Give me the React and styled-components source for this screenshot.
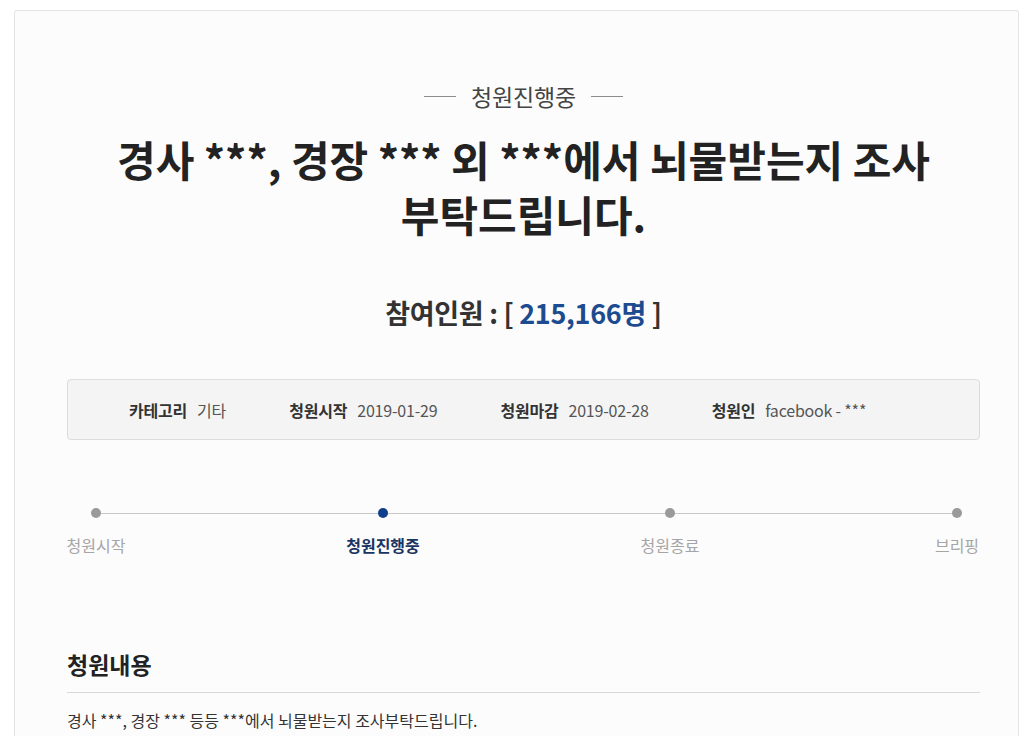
import React from "react";
import styled, { createGlobalStyle } from "styled-components";

const Global = createGlobalStyle`
  html, body { margin: 0; padding: 0; background: #ffffff; }
  body { font-family: "Noto Sans CJK KR", "Noto Sans", sans-serif; color: #333; }
`;

const Page = styled.div`
  padding: 10px 5px 0 14px;
  height: 736px;
  box-sizing: border-box;
  overflow: hidden;
`;

const Card = styled.div`
  background: #fcfcfc;
  border: 1px solid #e4e4e4;
  border-bottom: none;
  border-radius: 3px 3px 0 0;
  padding: 69px 38px 0 52px;
  min-height: 800px;
`;

const Status = styled.div`
  display: flex;
  align-items: center;
  justify-content: center;
  gap: 15px;
  font-size: 23px;
  color: #444;
  letter-spacing: -0.2px;
  line-height: 32px;
  &::before, &::after {
    content: "";
    width: 32px;
    height: 1px;
    background: #8c8c8c;
  }
`;

const Title = styled.h1`
  margin: 19px 0 0;
  text-align: center;
  font-size: 42px;
  font-weight: 700;
  line-height: 55px;
  color: #222;
  letter-spacing: 0;
`;

const Count = styled.div`
  margin-top: 54px;
  text-align: center;
  font-size: 27px;
  font-weight: 700;
  color: #333;
  line-height: 36px;
  letter-spacing: -0.3px;
`;

const Num = styled.span`
  color: #1c4b8f;
`;

const InfoBox = styled.div`
  margin-top: 48px;
  height: 61px;
  box-sizing: border-box;
  display: flex;
  align-items: center;
  gap: 63px;
  padding-left: 61px;
  background: #f4f4f4;
  border: 1px solid #dcdcdc;
  border-radius: 4px;
`;

const InfoItem = styled.div`
  display: flex;
  align-items: baseline;
  gap: 10px;
  font-size: 16px;
  letter-spacing: -0.2px;
`;

const InfoLabel = styled.span`
  font-weight: 700;
  color: #333;
`;

const InfoValue = styled.span`
  color: #555;
  font-weight: 400;
`;

const Steps = styled.div`
  position: relative;
  margin: 68px -17px 0 -11px;
  display: flex;
  justify-content: space-between;
  &::before {
    content: "";
    position: absolute;
    top: 5px;
    left: 40px;
    right: 40px;
    height: 1px;
    background: #c8c8c8;
  }
`;

const Step = styled.div`
  position: relative;
  width: 80px;
  display: flex;
  flex-direction: column;
  align-items: center;
  gap: 16px;
`;

const Dot = styled.span`
  width: 10px;
  height: 10px;
  border-radius: 50%;
  background: ${(p) => (p.$active ? "#0f3f8c" : "#9a9a9a")};
`;

const StepLabel = styled.span`
  font-size: 16px;
  letter-spacing: 0;
  white-space: nowrap;
  line-height: 22px;
  color: ${(p) => (p.$active ? "#1b3563" : "#a5a5a5")};
  font-weight: ${(p) => (p.$active ? 700 : 400)};
`;

const SectionTitle = styled.h2`
  margin: 93px 0 0;
  font-size: 23px;
  font-weight: 700;
  color: #222;
  line-height: 30px;
  letter-spacing: 0;
  padding-bottom: 13px;
  border-bottom: 1px solid #d8d8d8;
`;

const Body = styled.p`
  margin: 15px 0 0;
  font-size: 16px;
  color: #333;
  letter-spacing: 0;
  line-height: 24px;
`;

const steps = [
  { label: "청원시작" },
  { label: "청원진행중", active: true },
  { label: "청원종료" },
  { label: "브리핑" },
];

const info = [
  ["카테고리", "기타"],
  ["청원시작", "2019-01-29"],
  ["청원마감", "2019-02-28"],
  ["청원인", "facebook - ***"],
];

export default function App() {
  return (
    <>
      <Global />
      <Page>
        <Card>
          <Status>청원진행중</Status>
          <Title>
            경사 ***, 경장 *** 외 ***에서 뇌물받는지 조사
            <br />
            부탁드립니다.
          </Title>
          <Count>
            참여인원 : [ <Num>215,166명</Num> ]
          </Count>
          <InfoBox>
            {info.map(([l, v]) => (
              <InfoItem key={l}>
                <InfoLabel>{l}</InfoLabel>
                <InfoValue>{v}</InfoValue>
              </InfoItem>
            ))}
          </InfoBox>
          <Steps>
            {steps.map((s) => (
              <Step key={s.label}>
                <Dot $active={s.active} />
                <StepLabel $active={s.active}>{s.label}</StepLabel>
              </Step>
            ))}
          </Steps>
          <SectionTitle>청원내용</SectionTitle>
          <Body>경사 ***, 경장 *** 등등 ***에서 뇌물받는지 조사부탁드립니다.</Body>
        </Card>
      </Page>
    </>
  );
}
